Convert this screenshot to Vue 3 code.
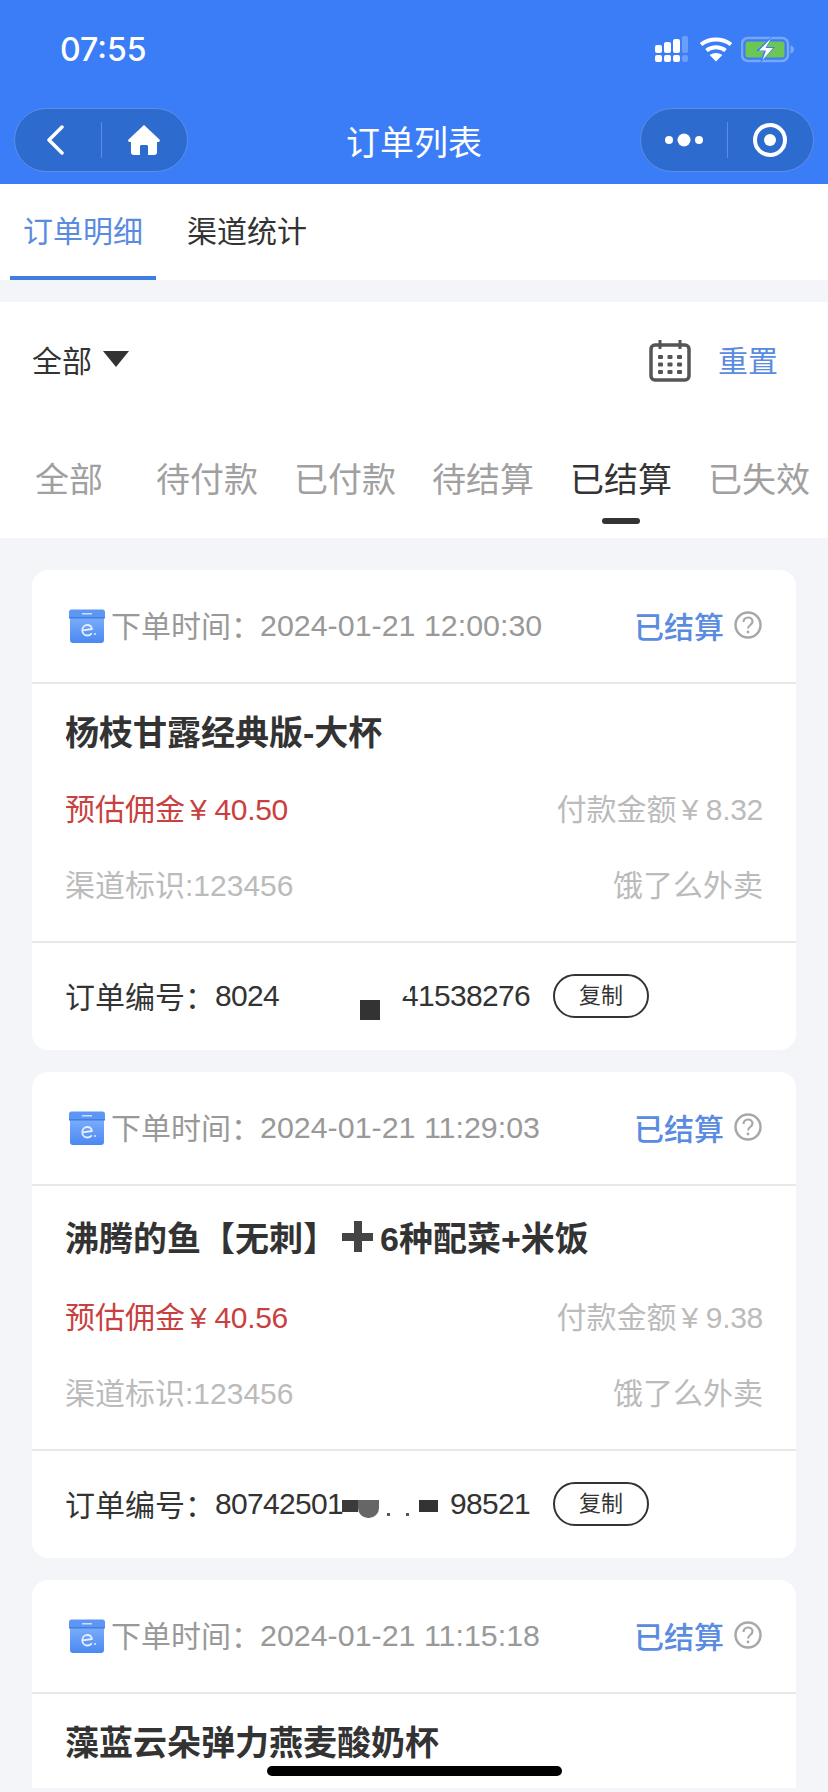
<template>
  <div class="page">
    <header class="top">
      <div class="status">
        <span class="clock">07:55</span>
        <div class="status-icons">
          <svg class="signal" width="34" height="27" viewBox="0 0 34 27">
            <g fill="#fff">
              <rect x="0" y="9" width="7" height="8" rx="2" />
              <rect x="9" y="6" width="7" height="11" rx="2" />
              <rect x="18" y="3" width="7" height="14" rx="2" />
              <rect x="0" y="19" width="7" height="7" rx="2" />
              <rect x="9" y="19" width="7" height="7" rx="2" />
              <rect x="18" y="19" width="7" height="7" rx="2" />
            </g>
            <g fill="#6a9ef8">
              <rect x="27" y="0" width="6" height="17" rx="2" />
              <rect x="27" y="19" width="6" height="7" rx="2" />
            </g>
          </svg>
          <svg class="wifi" width="32" height="25" viewBox="0 0 32 25">
            <path d="M1 7.500C9.500 .8 22.500 .8 31 7.500" fill="none" stroke="#fff" stroke-width="4" />
            <path d="M6.500 13.500C12 9.300 20 9.300 25.500 13.500" fill="none" stroke="#fff" stroke-width="4" />
            <path d="M9.600 18C13.500 15.200 18.500 15.200 22.400 18L16 24.600Z" fill="#fff" />
          </svg>
          <svg width="53" height="27" viewBox="0 0 53 27">
            <rect x="1" y="2" width="46" height="23" rx="6" fill="none" stroke="#79a6f7" stroke-width="2.500" />
            <rect x="4.500" y="5.500" width="39" height="16" rx="2.500" fill="#6cc656" />
            <path d="M49.500 9.500c2.500 .6 3.500 2 3.500 4s-1 3.400-3.500 4Z" fill="#79a6f7" />
            <path d="M31 0 15 15h8l-4 12 15-16h-8l5-11Z" fill="#3b7df6" />
            <path d="M30 2.500 18 14.500h7l-3.500 9.500L32 12h-7.500Z" fill="#fff" />
          </svg>
        </div>
      </div>
      <div class="nav">
        <div class="capsule">
          <div class="capsule-cell">
            <svg class="chevron" width="20" height="30" viewBox="0 0 20 30">
              <path d="M17 2 4 15l13 13" fill="none" stroke="#fff" stroke-width="3.500" stroke-linecap="round" stroke-linejoin="round" />
            </svg>
          </div>
          <i class="capsule-line"></i>
          <div class="capsule-cell">
            <svg width="34" height="32" viewBox="0 0 34 32">
              <path d="M17 1 1.500 15.500c-.8 1-.2 2.500 1.200 2.500H4v10.500C4 30 5.300 31 6.500 31H13v-8.500c0-1 .8-1.500 1.500-1.500h5c.8 0 1.500 .5 1.500 1.500V31h6.500c1.300 0 2.500-1 2.500-2.500V18h1.300c1.400 0 2-1.500 1.200-2.500Z" fill="#fff" />
            </svg>
          </div>
        </div>
        <h1 class="nav-title">订单列表</h1>
        <div class="capsule">
          <div class="capsule-cell">
            <svg width="38" height="14" viewBox="0 0 38 14">
              <circle cx="4" cy="7" r="4" fill="#fff" />
              <circle cx="19" cy="7" r="6.500" fill="#fff" />
              <circle cx="34" cy="7" r="4" fill="#fff" />
            </svg>
          </div>
          <i class="capsule-line"></i>
          <div class="capsule-cell">
            <svg width="36" height="36" viewBox="0 0 36 36">
              <circle cx="18" cy="18" r="15" fill="none" stroke="#fff" stroke-width="4" />
              <circle cx="18" cy="18" r="6" fill="#fff" />
            </svg>
          </div>
        </div>
      </div>
    </header>

    <nav class="main-tabs">
      <span class="main-tab active">订单明细</span>
      <span class="main-tab">渠道统计</span>
    </nav>

    <section class="filter">
      <div class="filter-row">
        <div class="filter-pick">
          <span>全部</span>
          <i class="caret"></i>
        </div>
        <div class="filter-tools">
          <svg class="calendar" width="44" height="44" viewBox="0 0 44 44">
            <rect x="3" y="6" width="38" height="35" rx="4" fill="none" stroke="#555" stroke-width="3.500" />
            <path d="M12 1v9M32 1v9" stroke="#555" stroke-width="3" />
            <g fill="#555">
              <rect v-for="d in calendarDots" :key="d.k" :x="d.x" :y="d.y" width="5" height="4" rx="1" />
            </g>
          </svg>
          <span class="reset">重置</span>
        </div>
      </div>
      <div class="status-tabs">
        <span v-for="t in statusTabs" :key="t" class="status-tab" :class="{ on: t === '已结算' }">{{ t }}</span>
      </div>
    </section>

    <main class="list">
      <article v-for="o in orders" :key="o.time" class="card" :class="{ cut: !o.pay }">
        <div class="card-head">
          <svg class="box-icon" width="38" height="36" viewBox="0 0 38 36">
            <defs>
              <linearGradient id="boxBody" x1="0" y1="0" x2="0" y2="1">
                <stop offset="0" stop-color="#7fb0fa" />
                <stop offset="1" stop-color="#4a88f2" />
              </linearGradient>
            </defs>
            <rect x="2" y="6" width="34" height="28" rx="3" fill="url(#boxBody)" />
            <path d="M1 3c0-1.500 1-2.500 2.500-2.500h31C36 .5 37 1.500 37 3v6H1Z" fill="#5d97f3" />
            <rect x="1" y="8" width="36" height="1.500" fill="#3f7fe6" />
            <rect x="14" y="4" width="10" height="1.500" fill="#cfe0fc" />
            <path d="M24 20c-.4-2.500-2.300-4-4.700-4-3 0-5 2.300-5 5.200s2.100 5.300 5 5.300c1.700 0 3-.6 4-1.700M14.800 21.300 24 20" fill="none" stroke="#e4eefe" stroke-width="1.800" stroke-linecap="round" />
            <circle cx="27" cy="25" r="1" fill="#e4eefe" />
          </svg>
          <span class="head-label">下单时间：</span>
          <span class="head-time">{{ o.time }}</span>
          <span class="head-state">已结算</span>
          <svg width="28" height="28" viewBox="0 0 28 28">
            <circle cx="14" cy="14" r="12.500" fill="none" stroke="#a8a8a8" stroke-width="2.500" />
            <path d="M9.500 11c0-2.800 2-4.500 4.500-4.500s4.500 1.700 4.500 4c0 3.500-4.500 3.500-4.500 7" fill="none" stroke="#a8a8a8" stroke-width="2.200" />
            <circle cx="14" cy="21" r="1.400" fill="#a8a8a8" />
          </svg>
        </div>
        <div class="card-body">
          <h2 class="goods" :class="{ tall: o.hasEmoji }">
            {{ o.title }}<template v-if="o.hasEmoji"><span class="plus-mark" role="img" aria-label="➕"></span>{{ o.titleEnd }}</template>
          </h2>
          <template v-if="o.pay">
            <div class="row">
              <span class="red">预估佣金<span class="money">¥ {{ o.fee }}</span></span>
              <span class="pale">付款金额<span class="money">¥ {{ o.pay }}</span></span>
            </div>
            <div class="row second">
              <span class="pale">渠道标识:123456</span>
              <span class="pale">饿了么外卖</span>
            </div>
          </template>
        </div>
        <div v-if="o.pay" class="card-foot">
          <span class="foot-label">订单编号：</span>
          <div class="order-no">
            <span>{{ o.noStart }}</span>
            <div class="mask">
              <i v-for="b in o.blobs" :key="b.left" class="blob" :style="{ left: b.left + 'px', top: b.top + 'px', width: b.w + 'px', height: b.h + 'px', background: b.c, borderRadius: b.r }"></i>
            </div>
            <span>{{ o.noEnd }}</span>
          </div>
          <span class="copy">复制</span>
        </div>
      </article>
    </main>

    <i class="home-bar"></i>
  </div>
</template>

<script setup>
const statusTabs = ["全部", "待付款", "已付款", "待结算", "已结算", "已失效"];

const calendarDots = [];
for (let r = 0; r < 3; r++) {
  for (let c = 0; c < 3; c++) {
    calendarDots.push({ k: r + "-" + c, x: 10 + c * 9.500, y: 16 + r * 7.500 });
  }
}

const orders = [
  {
    time: "2024-01-21 12:00:30",
    title: "杨枝甘露经典版-大杯",
    fee: "40.50",
    pay: "8.32",
    noStart: "8024",
    noEnd: "41538276",
    blobs: [
      { left: 81, top: 24, w: 20, h: 20, c: "#333" },
      { left: 119, top: 6, w: 12, h: 14, c: "#fff" },
    ],
  },
  {
    time: "2024-01-21 11:29:03",
    title: "沸腾的鱼【无刺】",
    titleEnd: "6种配菜+米饭",
    hasEmoji: true,
    fee: "40.56",
    pay: "9.38",
    noStart: "80742501",
    noEnd: "98521",
    blobs: [
      { left: -1, top: 16, w: 16, h: 12, c: "#3a3a3a" },
      { left: 15, top: 16, w: 21, h: 18, c: "#666", r: "0 0 10px 10px" },
      { left: 44, top: 29, w: 3, h: 3, c: "#555" },
      { left: 63, top: 29, w: 3, h: 3, c: "#555" },
      { left: 76, top: 16, w: 19, h: 12, c: "#333" },
    ],
  },
  { time: "2024-01-21 11:15:18", title: "藻蓝云朵弹力燕麦酸奶杯" },
];
</script>

<style>
html,
body {
  margin: 0;
  background: #f3f5f9;
}
</style>

<style scoped>
.page {
  position: relative;
  width: 828px;
  height: 1792px;
  overflow: hidden;
  background: #f3f5f9;
  font-family: "Liberation Sans", "Noto Sans CJK SC", sans-serif;
  color: #333;
}
.top {
  height: 184px;
  background: #3b7df6;
  color: #fff;
}
.status {
  height: 108px;
  padding: 32px 34px 0 60px;
  box-sizing: border-box;
  display: flex;
  justify-content: space-between;
  align-items: flex-start;
}
.clock {
  font-size: 32px;
  line-height: 36px;
  font-weight: 500;
  font-family: Inter, "Liberation Sans", sans-serif;
}
.status-icons {
  display: flex;
  align-items: center;
  gap: 9px;
  margin-top: 4px;
}
.signal {
  margin-right: 2px;
}
.nav {
  height: 64px;
  padding: 0 14px;
  display: flex;
  justify-content: space-between;
  align-items: center;
}
.capsule {
  width: 174px;
  height: 64px;
  box-sizing: border-box;
  border: 1px solid #5b8fe6;
  border-radius: 32px;
  background: #2e6bcf;
  display: flex;
  align-items: center;
}
.capsule-cell {
  flex: 1;
  display: flex;
  justify-content: center;
  align-items: center;
}
.chevron {
  margin-right: 5px;
}
.capsule-line {
  width: 1px;
  height: 36px;
  background: #5b8fe6;
}
.nav-title {
  margin: 0;
  font-size: 34px;
  font-weight: 400;
  color: #fff;
}
.main-tabs {
  height: 96px;
  background: #fff;
  padding-left: 10px;
  display: flex;
  gap: 18px;
}
.main-tab {
  width: 146px;
  box-sizing: border-box;
  padding-top: 26px;
  text-align: center;
  font-size: 30px;
  line-height: 44px;
}
.main-tab.active {
  color: #5a8be0;
  border-bottom: 4px solid #3f7de0;
}
.filter {
  margin-top: 22px;
  background: #fff;
  height: 236px;
  position: relative;
}
.filter-row {
  height: 114px;
  padding: 0 50px 2px 32px;
  display: flex;
  justify-content: space-between;
  align-items: center;
}
.filter-pick {
  display: flex;
  align-items: center;
  gap: 11px;
  font-size: 30px;
}
.caret {
  width: 0;
  height: 0;
  border-left: 13px solid transparent;
  border-right: 13px solid transparent;
  border-top: 16px solid #333;
}
.filter-tools {
  display: flex;
  align-items: center;
  gap: 26px;
}
.calendar {
  margin-top: 4px;
}
.reset {
  font-size: 30px;
  color: #5a8be0;
}
.status-tabs {
  display: grid;
  grid-template-columns: repeat(6, 1fr);
  padding-top: 40px;
}
.status-tab {
  position: relative;
  text-align: center;
  font-size: 34px;
  line-height: 44px;
  color: #a0a0a0;
}
.status-tab.on {
  color: #333;
}
.status-tab.on::after {
  content: "";
  position: absolute;
  left: 50%;
  bottom: -22px;
  width: 38px;
  height: 6px;
  margin-left: -19px;
  border-radius: 3px;
  background: #333;
}
.list {
  padding: 32px 32px 0;
  display: flex;
  flex-direction: column;
  gap: 22px;
}
.card {
  background: #fff;
  border-radius: 16px;
  overflow: hidden;
  flex-shrink: 0;
}
.card.cut {
  height: 208px;
  border-radius: 16px 16px 0 0;
}
.card-head {
  height: 114px;
  box-sizing: border-box;
  border-bottom: 2px solid #e8e8e8;
  padding: 0 34px 2px 36px;
  display: flex;
  align-items: center;
  font-size: 30px;
  color: #999;
}
.box-icon {
  margin-right: 5px;
  margin-top: 3px;
}
.head-label {
  margin-top: -2px;
}
.head-time {
  flex: 1;
  margin-left: -1px;
  font-size: 30.400px;
}
.head-state {
  margin-right: 10px;
  font-weight: 500;
  color: #5a8be0;
}
.card-body {
  padding: 0 33px;
}
.goods {
  margin: 0;
  height: 95px;
  padding-bottom: 3px;
  box-sizing: border-box;
  display: flex;
  align-items: center;
  font-size: 34px;
  font-weight: 700;
  color: #333;
}
.goods.tall {
  height: 101px;
  padding-bottom: 0;
}
.plus-mark {
  width: 31px;
  height: 31px;
  margin: 0 7px 0 5px;
  background:
    linear-gradient(#444, #444) center / 100% 8px no-repeat,
    linear-gradient(#444, #444) center / 8px 100% no-repeat;
}
.row {
  height: 56px;
  display: flex;
  justify-content: space-between;
  align-items: center;
  font-size: 30px;
}
.row.second {
  margin-top: 20px;
  margin-bottom: 30px;
}
.money {
  margin-left: 5px;
  letter-spacing: -0.300px;
}
.red {
  color: #c94040;
}
.pale {
  color: #bbb;
}
.card-foot {
  height: 109px;
  box-sizing: border-box;
  border-top: 2px solid #e8e8e8;
  padding: 0 0 2px 33px;
  display: flex;
  align-items: center;
}
.foot-label {
  width: 150px;
  margin-top: -2px;
  font-size: 30px;
}
.order-no {
  width: 315px;
  display: flex;
  font-size: 30px;
  line-height: 40px;
  letter-spacing: -0.700px;
}
.mask {
  position: relative;
  flex: 1;
}
.blob {
  position: absolute;
}
.copy {
  width: 96px;
  height: 44px;
  margin-left: 23px;
  box-sizing: border-box;
  border: 2px solid #333;
  border-radius: 22px;
  text-align: center;
  font-size: 22px;
  line-height: 40px;
}
.home-bar {
  position: absolute;
  left: 267px;
  top: 1766px;
  width: 295px;
  height: 10px;
  border-radius: 5px;
  background: #000;
}
</style>
